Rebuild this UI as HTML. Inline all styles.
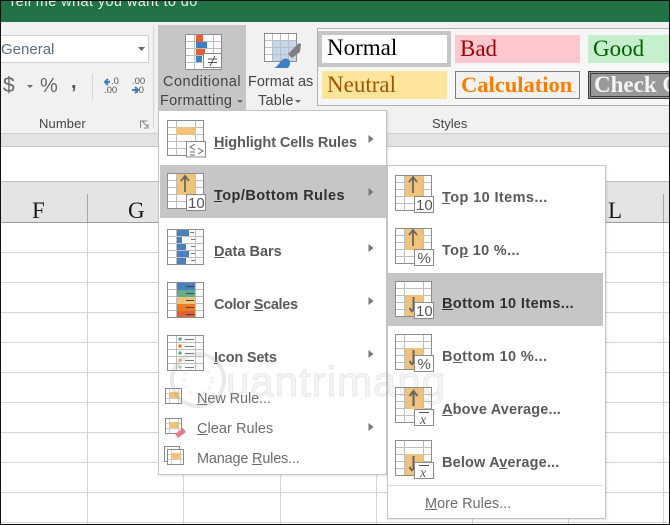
<!DOCTYPE html>
<html><head><meta charset="utf-8"><style>
html,body{margin:0;padding:0;background:#fff}
#p{position:relative;width:670px;height:525px;overflow:hidden;background:#fff;font-family:"Liberation Sans",sans-serif}
#p div{position:absolute;box-sizing:border-box;white-space:nowrap}
.t{line-height:18px;height:18px}
.b{font-weight:bold;font-size:14.5px;color:#5a5a5a}
.n{font-size:14.5px;color:#6d6d6d}
.r{font-size:14px;color:#444}
.h{color:#303030}
.s{font-family:"Liberation Serif",serif;font-size:23px;line-height:27px;padding-left:5px}
.c{font-family:"Liberation Serif",serif;font-size:23px;color:#1a1a1a;line-height:24px}
svg{position:absolute;left:0;top:0}
</style></head><body><div id="p">
<div style="left:0;top:0;width:670px;height:22px;background:#217346"></div>
<div style="left:8px;top:-7px;font-size:14.5px;line-height:18px;color:#e6f0ea;letter-spacing:.4px">Tell me what you want to do</div>
<div style="left:0;top:22px;width:670px;height:111px;background:#f1f1f1"></div>
<div style="left:0;top:133px;width:670px;height:14px;background:#e3e3e3;border-top:1px solid #d2d2d2;border-bottom:1px solid #c8c8c8"></div>
<div style="left:0;top:181px;width:670px;height:42px;background:#e4e4e4;border-top:1px solid #bdbdbd;border-bottom:1px solid #9c9c9c"></div>

<!-- ribbon number -->
<div style="left:-1px;top:35px;width:150px;height:28px;background:#fff;border:1px solid #d0d0d0"></div>
<div class="t r" style="left:1px;top:41px;color:#5a6f80;font-size:15px">General</div>
<div class="t" style="left:3px;top:74px;font-size:21px;line-height:24px;height:24px;color:#666">$</div>
<div class="t" style="left:40px;top:74px;font-size:20px;line-height:24px;height:24px;color:#666">%</div>
<div class="t" style="left:71px;top:70px;font-size:20px;line-height:24px;height:24px;color:#555;font-weight:bold">,</div>
<div class="t" style="left:111px;top:76px;font-size:9.500px;line-height:11px;height:11px;color:#555">.0</div>
<div class="t" style="left:104px;top:85px;font-size:9.500px;line-height:11px;height:11px;color:#555">.00</div>
<div class="t" style="left:132px;top:76px;font-size:9.500px;line-height:11px;height:11px;color:#555">.00</div>
<div class="t" style="left:136px;top:85px;font-size:9.500px;line-height:11px;height:11px;color:#555">.0</div>
<div class="t" style="left:39px;top:115px;font-size:13px;color:#444;letter-spacing:.1px">Number</div>

<!-- CF button -->
<div style="left:158px;top:25px;width:88px;height:85px;background:#c6c6c6"></div>
<div class="t" style="left:163px;top:73px;font-size:14.500px;color:#444;letter-spacing:.5px">Conditional</div>
<div class="t" style="left:160px;top:92px;font-size:14.500px;color:#444;letter-spacing:.3px">Formatting</div>
<div class="t" style="left:248px;top:73px;font-size:14.500px;color:#444">Format as</div>
<div class="t" style="left:258px;top:92px;font-size:14.500px;color:#444;letter-spacing:.2px">Table</div>

<!-- styles gallery -->
<div style="left:317px;top:28px;width:360px;height:78px;background:#f6f6f6;border:1px solid #b2b2b2"></div>
<div class="s" style="left:318px;top:31px;width:133px;height:36px;background:#fff;border:4.500px solid #c6c6c6;color:#000;line-height:26px;padding-left:5px">Normal</div>
<div class="s" style="left:455px;top:35px;width:125px;height:28px;background:#ffc7ce;color:#9c0006">Bad</div>
<div class="s" style="left:588px;top:35px;width:82px;height:28px;background:#c6efce;color:#006100">Good</div>
<div class="s" style="left:322px;top:71px;width:125px;height:28px;background:#ffe49c;color:#9c5700">Neutral</div>
<div class="s" style="left:455px;top:71px;width:125px;height:28px;background:#f2f2f2;border:1px solid #7f7f7f;color:#fa7d00;font-weight:bold;line-height:25px;font-size:22.500px">Calculation</div>
<div style="left:588px;top:71px;width:90px;height:28px;background:#999;border:3px double #3f3f3f;overflow:hidden"><div class="s" style="left:1px;top:-3px;color:#f4f4f4;font-weight:bold;padding-left:2px">Check Cell</div></div>
<div class="t" style="left:432px;top:115px;font-size:13px;color:#444">Styles</div>

<!-- column letters -->
<div class="c" style="left:32px;top:199px">F</div>
<div class="c" style="left:128px;top:199px">G</div>
<div class="c" style="left:608px;top:199px">L</div>

<!-- background svg: grid + ribbon icons -->
<svg width="670" height="525" viewBox="0 0 670 525" font-family="Liberation Sans, sans-serif">
<defs>
<symbol id="g" width="38" height="37" viewBox="0 0 38 37" overflow="visible">
<rect x=".5" y=".5" width="36" height="35" fill="#fff" stroke="#8c8c8c"/>
<path d="M.5 7.500h36M.5 14.500h36M.5 21.500h36M.5 28.500h36M9.500 0v36M28.500 0v36" stroke="#bdbdbd" fill="none"/>
<rect x=".5" y=".5" width="36" height="35" fill="none" stroke="#8c8c8c"/>
</symbol>
<symbol id="m" width="18" height="17" viewBox="0 0 18 17" overflow="visible">
<rect x=".5" y=".5" width="16" height="15" fill="#fff" stroke="#8a8a8a"/>
<path d="M1 5.500h15M1 10.500h15M4.500 1v14M13.500 1v14" stroke="#cfcfcf" fill="none"/>
<rect x="4" y="4" width="10" height="6" fill="#efc47a"/>
<rect x=".5" y=".5" width="16" height="15" fill="none" stroke="#8a8a8a"/>
</symbol>
</defs>
<g stroke="#d4d4d4" fill="none">
<path d="M0 252.500h670M0 282.500h670M0 312.500h670M0 342.500h670M0 372.500h670M0 402.500h670M0 432.500h670M0 462.500h670M0 492.500h670M0 522.500h670"/>
<path d="M87.500 223v302M183.500 223v302M280.500 223v302M376.500 223v302M472.500 223v302M568.500 223v302M663.500 223v302"/>
</g>
<path d="M87.500 194v28M663.500 194v28" stroke="#a8a8a8" fill="none"/>
<path d="M153.500 26v102M92.500 74v26" stroke="#d4d4d4" fill="none"/>
<path d="M138 47h7l-3.500 4zM27 85h6l-3 3zM237 100h6l-3 3zM295 100h6l-3 3z" fill="#666"/>
<path d="M110 82h-4m2-3l-3 3 3 3M132 90h5m-2-3l3 3-3 3" stroke="#3d80c0" stroke-width="2" fill="none"/>
<path d="M140.500 128v-7h7M142 121l6 6M148 124v4h-4" stroke="#888" fill="none"/>

<!-- CF icon -->
<use href="#g" x="185" y="34"/>
<rect x="196" y="35" width="7" height="7" fill="#e0603a"/><rect x="196" y="42" width="11" height="6" fill="#3f7fc4"/>
<rect x="196" y="49" width="9" height="6" fill="#e0603a"/><rect x="196" y="56" width="6" height="6" fill="#3f7fc4"/>
<rect x="203.500" y="53.500" width="18" height="14" fill="#fff" stroke="#8a8a8a"/>
<path d="M208 59h9M208 62.500h9M215 56l-5 10" stroke="#555" fill="none"/>
<!-- Table icon -->
<rect x="264.500" y="33.500" width="32" height="28" fill="#fff" stroke="#8c8c8c"/>
<rect x="272" y="41" width="24" height="20" fill="#c3d7ec"/>
<path d="M265 40.500h31M265 47.500h31M265 54.500h31M272.500 34v27M280.500 34v27M288.500 34v27" stroke="#bdbdbd" fill="none"/>
<rect x="264.500" y="33.500" width="32" height="28" fill="none" stroke="#8c8c8c"/>
<path d="M288 54l11-11 2 1-1 8-8 6z" fill="#7f7f7f"/>
<path d="M274 68c3-1 6-6 8-8 2-2 6-2 7 0 2 2 1 6-1 8z" fill="#3f7fc4"/>
</svg>

<!-- Menu 1 -->
<div style="left:158px;top:110px;width:229px;height:365px;background:#fff;border:1px solid #c4c4c4;box-shadow:1px 1px 2px rgba(0,0,0,.12)"></div>
<div style="left:160px;top:165px;width:226px;height:53px;background:#c6c6c6"></div>
<!-- Submenu -->
<div style="left:387px;top:165px;width:219px;height:354px;background:#fff;border:1px solid #c4c4c4;box-shadow:1px 1px 2px rgba(0,0,0,.12)"></div>
<div style="left:388px;top:273px;width:215px;height:53px;background:#c6c6c6"></div>

<svg width="670" height="525" viewBox="0 0 670 525" font-family="Liberation Sans, sans-serif">
<!-- highlight -->
<use href="#g" x="167" y="120"/><rect x="176" y="127" width="20" height="8" fill="#efc47a"/>
<rect x="186.500" y="141.500" width="19" height="15.500" fill="#fff" stroke="#8a8a8a"/>
<path d="M195 144l-5 3 5 3M198 148l5 3-5 3M190 152h5M190 155h5" stroke="#666" fill="none"/>
<!-- top bottom -->
<use href="#g" x="167" y="173"/><rect x="177" y="174" width="18" height="21" fill="#efc47a"/>
<path d="M185 192v-16m-4 5l4-5 4 5" stroke="#666" stroke-width="1.800" fill="none"/>
<rect x="186.500" y="194.500" width="19" height="16" fill="#fff" stroke="#8a8a8a"/>
<text x="188" y="208" font-size="15" fill="#555">10</text>
<!-- data bars -->
<use href="#g" x="167" y="229"/>
<path d="M177 230h12v6h-12zM177 237h5v6h-5zM177 244h9v6h-9zM177 251h12v6h-12zM177 258h9v6h-9z" fill="#4a80c0"/>
<path d="M190 232.500h4M191 239.500h4M191 246.500h4M191 253.500h4M191 260.500h4" stroke="#777"/>
<!-- color scales -->
<use href="#g" x="167" y="282"/>
<rect x="177" y="283" width="18" height="7" fill="#4a80c0"/><rect x="177" y="290" width="18" height="7" fill="#62ab8c"/><rect x="177" y="297" width="18" height="7" fill="#efc47a"/><rect x="177" y="304" width="18" height="7" fill="#ee7a22"/><rect x="177" y="311" width="18" height="6" fill="#e0603a"/>
<path d="M186 286.500h8M186 293.500h8M186 300.500h8M186 307.500h8M186 314.500h8" stroke="#444"/>
<!-- icon sets -->
<use href="#g" x="167" y="335"/>
<circle cx="180" cy="339" r="1.800" fill="#62ab8c"/><circle cx="180" cy="346" r="1.800" fill="#ee7a22"/><circle cx="180" cy="353" r="1.800" fill="#62ab8c"/><circle cx="180" cy="360" r="1.800" fill="#f0a868"/><circle cx="180" cy="367" r="1.800" fill="#a9d3c0"/>
<path d="M185 339.500h9M185 346.500h9M185 353.500h9M185 360.500h9M185 367.500h9" stroke="#777"/>
<!-- small -->
<use href="#m" x="165" y="388"/>
<use href="#m" x="165" y="418"/>
<path d="M175 434l8-6 3 4-8 6z" fill="#e77a8e"/>
<rect x="164.500" y="446.500" width="15" height="15" fill="none" stroke="#8a8a8a"/>
<use href="#m" x="167" y="449"/>
<!-- arrows -->
<path d="M368.500 135l5 4-5 4zM368.500 188l5 4-5 4zM368.500 244l5 4-5 4zM368.500 297l5 4-5 4zM368.500 350l5 4-5 4zM368.500 423l5 4-5 4z" fill="#777"/>
<!-- submenu icons -->
<use href="#g" x="395" y="175"/><rect x="405" y="176" width="18" height="21" fill="#efc47a"/><path d="M413 193v-16m-4 5l4-5 4 5" stroke="#666" stroke-width="1.800" fill="none"/>
<rect x="414.500" y="196.500" width="19" height="16" fill="#fff" stroke="#8a8a8a"/><text x="416" y="210" font-size="15" fill="#555">10</text>

<use href="#g" x="395" y="228"/><rect x="405" y="229" width="18" height="21" fill="#efc47a"/><path d="M413 246v-16m-4 5l4-5 4 5" stroke="#666" stroke-width="1.800" fill="none"/>
<rect x="414.500" y="249.500" width="19" height="16" fill="#fff" stroke="#8a8a8a"/><text x="417.500" y="263" font-size="15" fill="#555">%</text>

<use href="#g" x="395" y="281"/><rect x="405" y="295" width="18" height="21" fill="#efc47a"/><path d="M413.500 297v14m-4-3l3 4" stroke="#666" stroke-width="2" fill="none"/>
<rect x="414.500" y="302.500" width="19" height="16" fill="#fff" stroke="#8a8a8a"/><text x="416" y="316" font-size="15" fill="#555">10</text>

<use href="#g" x="395" y="334"/><rect x="405" y="348" width="18" height="21" fill="#efc47a"/><path d="M413.500 350v14m-4-3l3 4" stroke="#666" stroke-width="2" fill="none"/>
<rect x="414.500" y="355.500" width="19" height="16" fill="#fff" stroke="#8a8a8a"/><text x="417.500" y="369" font-size="15" fill="#555">%</text>

<use href="#g" x="395" y="387"/><rect x="405" y="388" width="18" height="21" fill="#efc47a"/><path d="M413.500 406v-15m-4 5l4-5 4 5" stroke="#666" stroke-width="2.200" fill="none"/>
<rect x="414.500" y="409.500" width="19" height="16" fill="#fff" stroke="#8a8a8a"/><path d="M419 412.500h10" stroke="#555"/><text x="420" y="424" font-size="14" font-style="italic" font-family="Liberation Serif, serif" fill="#555">x</text>

<use href="#g" x="395" y="440"/><rect x="405" y="454" width="18" height="21" fill="#efc47a"/><path d="M413.500 456v14m-4-3l3 4" stroke="#666" stroke-width="2" fill="none"/>
<rect x="414.500" y="462.500" width="19" height="16" fill="#fff" stroke="#8a8a8a"/><path d="M419 465.500h10" stroke="#555"/><text x="420" y="477" font-size="14" font-style="italic" font-family="Liberation Serif, serif" fill="#555">x</text>
<path d="M388 485.500h215" stroke="#dedede"/>
</svg>

<!-- menu text -->
<div class="t b" style="left:214px;top:134px;letter-spacing:-.1px"><u>H</u>ighlight Cells Rules</div>
<div class="t b h" style="left:214px;top:187px;letter-spacing:.45px"><u>T</u>op/Bottom Rules</div>
<div class="t b" style="left:214px;top:243px"><u>D</u>ata Bars</div>
<div class="t b" style="left:214px;top:296px;letter-spacing:-.35px">Color <u>S</u>cales</div>
<div class="t b" style="left:214px;top:349px;letter-spacing:-.2px"><u>I</u>con Sets</div>
<div class="t n" style="left:197px;top:390px;letter-spacing:-.1px"><u>N</u>ew Rule...</div>
<div class="t n" style="left:197px;top:420px;letter-spacing:.05px"><u>C</u>lear Rules</div>
<div class="t n" style="left:197px;top:450px;letter-spacing:-.2px">Manage <u>R</u>ules...</div>

<div class="t b" style="left:442px;top:189px;letter-spacing:.4px"><u>T</u>op 10 Items...</div>
<div class="t b" style="left:442px;top:242px;letter-spacing:.3px">To<u>p</u> 10 %...</div>
<div class="t b h" style="left:442px;top:295px;letter-spacing:.4px"><u>B</u>ottom 10 Items...</div>
<div class="t b" style="left:442px;top:348px;letter-spacing:.4px">B<u>o</u>ttom 10 %...</div>
<div class="t b" style="left:442px;top:401px;letter-spacing:.15px"><u>A</u>bove Average...</div>
<div class="t b" style="left:442px;top:454px;letter-spacing:.15px">Below A<u>v</u>erage...</div>
<div class="t n" style="left:425px;top:495px"><u>M</u>ore Rules...</div>

<!-- watermark -->
<svg width="670" height="525" viewBox="0 0 670 525" font-family="Liberation Sans, sans-serif">
<circle cx="198" cy="380" r="26" fill="none" stroke="#999" stroke-opacity=".22" stroke-width="4"/>
<circle cx="198" cy="380" r="14" fill="none" stroke="#999" stroke-opacity=".13" stroke-width="3" stroke-dasharray="3 4"/>
<text x="226" y="396" font-size="42" fill="#aaa" fill-opacity=".12" stroke="#888" stroke-opacity=".15" letter-spacing="1">uantrimang</text>
</svg>

<!-- frame -->
<div style="left:0;top:0;width:670px;height:1px;background:#111"></div>
<div style="left:0;top:0;width:1px;height:525px;background:#111"></div>
<div style="left:669px;top:0;width:1px;height:525px;background:#111"></div>
<div style="left:0;top:524px;width:670px;height:1px;background:#111"></div>
</div></body></html>
